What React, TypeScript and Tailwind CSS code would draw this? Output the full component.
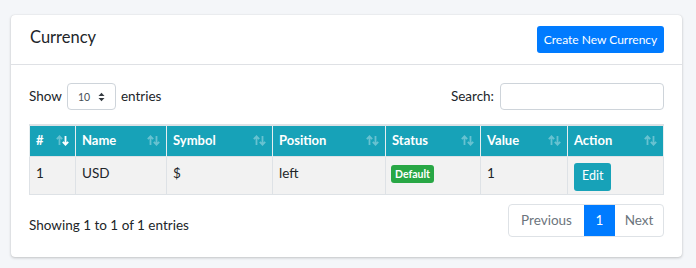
import React from 'react'

const font = { fontFamily: 'Lato, "Open Sans", "Liberation Sans", sans-serif' }

function SortIcon({ active }: { active?: 'up' | 'down' }) {
  const up = active === 'up' ? '#ffffff' : 'rgba(255,255,255,0.35)'
  const down = active === 'down' ? '#ffffff' : 'rgba(255,255,255,0.35)'
  return (
    <svg width="13" height="11" viewBox="0 0 13 11" className="shrink-0">
      <path d="M3.5 10V1.5M0.8 4.2L3.5 1.3L6.2 4.2" stroke={up} strokeWidth="1.8" fill="none" />
      <path d="M9.5 1V9.5M6.8 6.8L9.5 9.7L12.2 6.8" stroke={down} strokeWidth="1.8" fill="none" />
    </svg>
  )
}

const columns = [
  { label: '#', w: 'w-[46px]', active: 'down' as const },
  { label: 'Name', w: 'w-[91px]' },
  { label: 'Symbol', w: 'w-[106px]' },
  { label: 'Position', w: 'w-[113px]' },
  { label: 'Status', w: 'w-[95px]' },
  { label: 'Value', w: 'w-[87px]' },
  { label: 'Action', w: 'w-[96px]' },
]

export default function App() {
  return (
    <div className="min-h-[268px] bg-[#f4f6f9] pl-[11px] pr-[14px] pt-[15px] text-[#212529]" style={font}>
      <div className="w-[671px] rounded-[4px] bg-white shadow-[0_0_1px_rgba(0,0,0,0.13),0_1px_3px_rgba(0,0,0,0.2)]">
        <div className="flex h-[50px] items-center justify-between border-b border-[#dfe1e5] pl-[19px] pr-[18px]">
          <h3 className="pb-[4px] text-[16.5px] leading-none text-[#212529]">Currency</h3>
          <button className="h-[27px] w-[127px] rounded-[3px] bg-[#007bff] text-[12px] text-white">
            Create New Currency
          </button>
        </div>

        <div className="px-[18px] pt-[18px] pb-[20px]">
          <div className="flex items-center justify-between text-[13.5px]">
            <div className="flex items-center gap-[5px]">
              <span>Show</span>
              <div className="flex h-[27px] w-[49px] items-center justify-between rounded-[4px] border border-[#ced4da] pl-[10px] pr-[10px]">
                <span className="pt-[2px] text-[10.5px] text-[#495057]">10</span>
                <svg width="7" height="10" viewBox="0 0 7 10">
                  <path d="M0.5 4L3.5 0.8L6.5 4Z" fill="#343a40" />
                  <path d="M0.5 6L3.5 9.2L6.5 6Z" fill="#343a40" />
                </svg>
              </div>
              <span>entries</span>
            </div>
            <div className="flex items-center gap-[6px]">
              <span>Search:</span>
              <input className="h-[27px] w-[164px] rounded-[4px] border border-[#ced4da] outline-none" />
            </div>
          </div>

          <table className="mt-[14px] w-[635px] table-fixed border-collapse border-t-[2px] border-[#dee2e6] text-[13.5px]">
            <thead>
              <tr className="bg-[#17a2b8] text-white">
                {columns.map((c) => (
                  <th key={c.label} className={`${c.w} h-[31px] border-x border-[#e6eef0] px-[6px] text-left text-[13px] font-bold`}>
                    <div className="flex items-center justify-between">
                      <span>{c.label}</span>
                      <SortIcon active={c.active} />
                    </div>
                  </th>
                ))}
              </tr>
            </thead>
            <tbody>
              <tr className="h-[38px] bg-[#f2f2f2]">
                <td className="border border-[#dee2e6] px-[6px] pb-[4px]">1</td>
                <td className="border border-[#dee2e6] px-[6px] pb-[4px]">USD</td>
                <td className="border border-[#dee2e6] px-[6px] pb-[4px]">$</td>
                <td className="border border-[#dee2e6] px-[6px] pb-[4px]">left</td>
                <td className="border border-[#dee2e6] px-[5px] pb-[3px]">
                  <span className="inline-block rounded-[3px] bg-[#28a745] px-[4px] py-[2px] text-[10.5px] font-bold leading-[14px] text-white">
                    Default
                  </span>
                </td>
                <td className="border border-[#dee2e6] px-[6px] pb-[4px]">1</td>
                <td className="border border-[#dee2e6] px-[6px] pt-[3px]">
                  <button className="h-[28px] rounded-[3px] bg-[#17a2b8] px-[8px] text-[12.5px] text-white">Edit</button>
                </td>
              </tr>
            </tbody>
          </table>

          <div className="mt-[9px] flex items-start justify-between">
            <span className="pt-[11px] text-[13.5px]">Showing 1 to 1 of 1 entries</span>
            <div className="flex h-[33px] overflow-hidden rounded-[4px] border border-[#dee2e6] text-[13.5px]">
              <span className="flex w-[75px] items-center justify-center text-[#6c757d]">Previous</span>
              <span className="flex w-[31px] items-center justify-center bg-[#007bff] text-white">1</span>
              <span className="flex w-[48px] items-center justify-center text-[#6c757d]">Next</span>
            </div>
          </div>
        </div>
      </div>
    </div>
  )
}
